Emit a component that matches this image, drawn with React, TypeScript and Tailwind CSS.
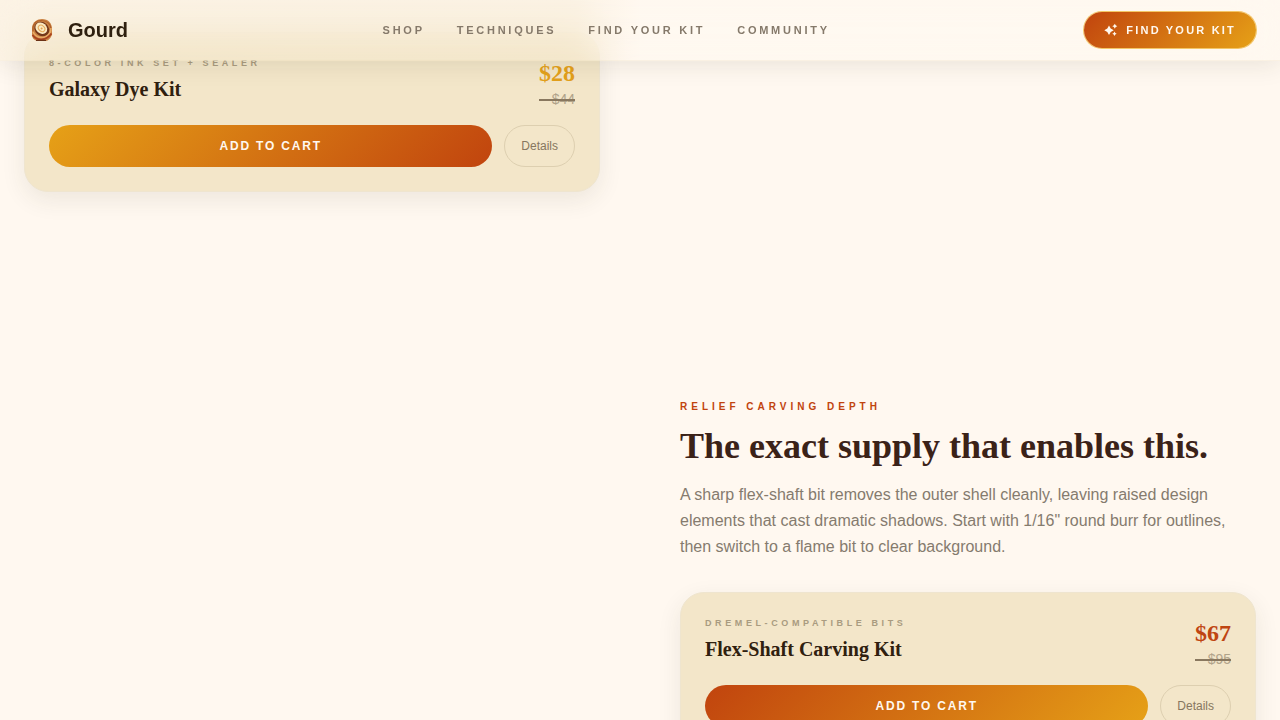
import React from 'react';

interface Kit {
  label: string;
  name: string;
  price: string;
  oldPrice: string;
  tone: 'gold' | 'rust';
}

const NAV_LINKS = ['Shop', 'Techniques', 'Find your kit', 'Community'];

const DYE_KIT: Kit = {
  label: '8-color ink set + sealer',
  name: 'Galaxy Dye Kit',
  price: '$28',
  oldPrice: '$44',
  tone: 'gold',
};

const CARVING_KIT: Kit = {
  label: 'Dremel-compatible bits',
  name: 'Flex-Shaft Carving Kit',
  price: '$67',
  oldPrice: '$95',
  tone: 'rust',
};

const GourdLogo: React.FC = () => (
  <svg viewBox="0 0 36 36" className="h-9 w-9" aria-hidden="true">
    <path d="M8 15 C9 10 13 7 18 7 C24 7 28 11 28 17 L28 23 C26 27 24 29 21 29 L13 29 C10 28 8 26 8 23 Z" fill="#c98142" />
    <path d="M9 19 C8.5 12 12 8.500 17 8.500 C23 8.500 27 12 27 18" fill="none" stroke="#b0602a" strokeWidth="1.2" />
    <ellipse cx="17.8" cy="17" rx="8" ry="6.800" transform="rotate(42 17.8 17)" fill="#74371a" />
    <path d="M9 20 C12 26 19 27 23 24 C26 22 27 19 27 16" fill="none" stroke="#e8ab66" strokeWidth="1.6" />
    <path d="M8.5 23 C13 29 22 29 27.5 21.500" fill="none" stroke="#a8421f" strokeWidth="1.8" />
    <path d="M12 28.400 L22 28.400" fill="none" stroke="#6b3216" strokeWidth="1.2" />
    <ellipse cx="17.3" cy="16.2" rx="6.4" ry="5.2" transform="rotate(42 17.3 16.2)" fill="#fbeac2" />
    <ellipse cx="17.6" cy="16.400" rx="3.6" ry="2.8" transform="rotate(42 17.6 16.4)" fill="none" stroke="#e6ab5e" strokeWidth="1.1" />
    <circle cx="17.6" cy="16.400" r="1" fill="#e0a050" />
  </svg>
);

const SparkleIcon: React.FC = () => (
  <svg viewBox="0 0 14 14" className="h-3.5 w-3.5" fill="currentColor" aria-hidden="true">
    <path d="M5 2.6 L6.7 5.6 L9.7 7.3 L6.7 9 L5 12 L3.3 9 L0.3 7.3 L3.3 5.6 Z" />
    <path d="M10.8 0.700 L11.700 2.300 L13.300 3.200 L11.700 4.100 L10.800 5.700 L9.900 4.100 L8.300 3.200 L9.900 2.300 Z" />
    <path d="M10.500 8.600 L11.300 10 L12.700 10.800 L11.300 11.600 L10.500 13 L9.700 11.600 L8.300 10.800 L9.700 10 Z" />
  </svg>
);

const KitCard: React.FC<{ kit: Kit }> = ({ kit }) => {
  const isGold = kit.tone === 'gold';

  return (
    <div className="rounded-3xl border border-[#efe5cf] bg-[#f3e6c9] p-6 shadow-[0_8px_24px_rgba(50,50,30,0.09)]">
      <div className="flex items-start justify-between">
        <div>
          <p className="text-[9px] leading-3 font-bold tracking-[0.4em] text-[#a99b80] uppercase">{kit.label}</p>
          <h3 className="mt-2 font-['Liberation_Serif',serif] text-xl leading-6 font-bold text-[#2f200f]">{kit.name}</h3>
        </div>
        <div className="text-right">
          <p className={`font-['Liberation_Serif',serif] text-2xl leading-8 font-bold ${isGold ? 'text-[#e3a01b]' : 'text-[#bf4512]'}`}>
            {kit.price}
          </p>
          <p className="relative text-sm leading-5 text-[#b0a389]">
            {kit.oldPrice}
            <span className="absolute inset-x-0 top-1/2 h-0.5 bg-[#89785f]" />
          </p>
        </div>
      </div>
      <div className="mt-4 flex gap-3">
        <button
          className={`h-[42px] flex-1 rounded-full text-xs font-bold tracking-[0.15em] text-[#fff8f0] uppercase ${
            isGold ? 'bg-[linear-gradient(135deg,#e6a117,#c1440e)]' : 'bg-[linear-gradient(135deg,#c1440e,#e6a117)]'
          }`}
        >
          Add to cart
        </button>
        <button className="h-[42px] rounded-full border border-[#ddcfb0] px-4 text-xs text-[#86775f]">Details</button>
      </div>
    </div>
  );
};

const App: React.FC = () => {
  return (
    <div className="min-h-screen bg-[#fff8f0] font-['Liberation_Sans',sans-serif]">
      <header className="fixed inset-x-0 top-0 z-50 border-b border-[#e6d5b0]/20 shadow-[0_4px_24px_rgba(50,50,30,0.1)] backdrop-blur-[20px]">
        <div className="flex h-[60px] items-center justify-between bg-linear-to-r from-[#f3e6c9]/30 from-45% to-[#fff8f0]/30 to-50% px-6">
          <a href="#" className="flex items-center gap-2">
            <GourdLogo />
            <span className="text-xl font-bold text-[#2f200f]">Gourd</span>
          </a>
          <nav className="flex gap-8">
            {NAV_LINKS.map((link) => (
              <a key={link} href="#" className="text-[11px] leading-4 font-bold tracking-[0.25em] text-[#85796a] uppercase">
                {link}
              </a>
            ))}
          </nav>
          <button className="flex h-9 items-center gap-2 rounded-full bg-[linear-gradient(135deg,#c1440e,#e6a117)] px-5 text-[11px] font-bold tracking-[0.2em] text-[#fff8f0] uppercase ring-1 ring-[#f3c667]">
            <SparkleIcon />
            Find your kit
          </button>
        </div>
      </header>

      <main className="flex flex-col gap-[206px] px-6 pt-8">
        <section className="grid grid-cols-2 gap-20">
          <KitCard kit={DYE_KIT} />
        </section>

        <section className="grid grid-cols-2 gap-20">
          <div className="col-start-2">
            <p className="text-[10px] leading-[18px] font-bold tracking-[0.4em] text-[#c1440e] uppercase">Relief carving depth</p>
            <h2 className="mt-2.5 font-['Liberation_Serif',serif] text-4xl leading-10 font-bold text-[#3b2218]">
              The exact supply that enables this.
            </h2>
            <p className="mt-4 mb-8 text-base leading-[26px] text-[#857b6e]">
              A sharp flex-shaft bit removes the outer shell cleanly, leaving raised design elements that cast dramatic
              shadows. Start with 1/16" round burr for outlines, then switch to a flame bit to clear background.
            </p>
            <KitCard kit={CARVING_KIT} />
          </div>
        </section>
      </main>
    </div>
  );
};

export default App;
